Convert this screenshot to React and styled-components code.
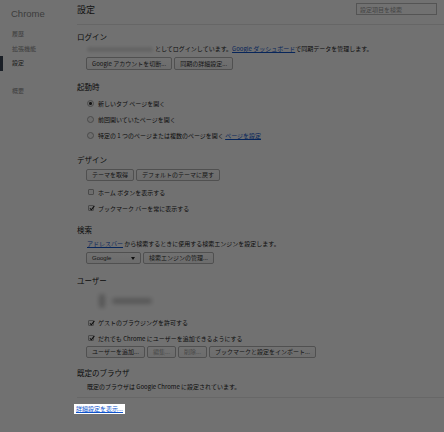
import React from "react";
import styled, { createGlobalStyle } from "styled-components";

const GlobalStyle = createGlobalStyle`
  html, body {
    margin: 0;
    padding: 0;
    background: #ffffff;
  }
  body {
    font-family: "Noto Sans CJK JP", "Liberation Sans", sans-serif;
    color: #222222;
  }
`;

const Page = styled.div`
  position: relative;
  width: 444px;
  height: 432px;
  display: flex;
  overflow: hidden;
  background: #ffffff;
`;

// dim layer over the whole settings page
const Overlay = styled.div`
  position: absolute;
  inset: 0;
  background: rgba(0, 0, 0, 0.557);
  z-index: 1;
`;

const Sidebar = styled.nav`
  width: 72px;
  flex-shrink: 0;
  display: flex;
  flex-direction: column;
`;

const Brand = styled.div`
  height: 27px;
  padding-left: 11px;
  display: flex;
  align-items: center;
  font-family: "Liberation Sans", Arial, sans-serif;
  font-size: 9.5px;
  color: #8a8a8a;
`;

const NavItem = styled.div`
  height: 14.5px;
  line-height: 14.5px;
  padding-left: 9px;
  font-size: 6px;
  color: ${(p) => (p.$active ? "#444444" : "#8e8e8e")};
  border-left: 3px solid ${(p) => (p.$active ? "#3b4656" : "transparent")};
  margin-top: ${(p) => (p.$gap ? "13.5px" : "0")};
`;

const Main = styled.main`
  flex: 1;
  padding-left: 5px;
  display: flex;
  flex-direction: column;
`;

const Header = styled.header`
  height: 24px;
  flex-shrink: 0;
  border-bottom: 1px solid #e6e6e6;
  display: flex;
  align-items: center;
  justify-content: space-between;
  padding-right: 7px;
`;

const Title = styled.h1`
  margin: 0;
  font-size: 9px;
  font-weight: normal;
  color: #303030;
  line-height: 12px;
  padding-bottom: 5px;
`;

const Search = styled.input`
  box-sizing: border-box;
  width: 81px;
  height: 12px;
  border: 1px solid #bdbdbd;
  padding: 0 3px;
  font-family: inherit;
  font-size: 6px;
  margin-bottom: 6px;
  outline: none;
  &::placeholder {
    color: #9a9a9a;
  }
`;

const Section = styled.section`
  box-sizing: border-box;
  height: ${(p) => p.$h}px;
  flex-shrink: 0;
  padding-top: 6px;
  display: flex;
  flex-direction: column;
  border-bottom: ${(p) => (p.$rule ? "1px solid #e8e8e8" : "none")};
`;

const SectionTitle = styled.h3`
  margin: 0;
  height: 12px;
  line-height: 12px;
  font-size: 7.5px;
  font-weight: normal;
  color: #222222;
`;

const Body = styled.div`
  padding-left: 10px;
  padding-top: ${(p) => p.$pt || 0}px;
  display: flex;
  flex-direction: column;
`;

const Text = styled.div`
  height: 12px;
  line-height: 12px;
  margin-top: ${(p) => p.$mt || 0}px;
  font-size: 6px;
  white-space: nowrap;
  display: flex;
  align-items: center;
`;

const Link = styled.a`
  color: #1155cc;
  text-decoration: underline;
  cursor: pointer;
`;

const Blur = styled.span`
  display: inline-block;
  width: ${(p) => p.$w}px;
  height: ${(p) => p.$hh}px;
  background: ${(p) => p.$c || "#d8d8d8"};
  border-radius: 3px;
  filter: blur(${(p) => p.$r || 1.5}px);
  margin-right: ${(p) => p.$mr || 0}px;
`;

const ButtonRow = styled.div`
  display: flex;
  gap: 2px;
  margin-top: ${(p) => p.$mt ?? 2}px;
  margin-left: -1px;
`;

const Button = styled.button`
  box-sizing: border-box;
  height: ${(p) => p.$h || 12}px;
  padding: 0 5px;
  font-family: inherit;
  font-size: 6px;
  line-height: 1;
  color: ${(p) => (p.disabled ? "#a8a8a8" : "#333333")};
  background: linear-gradient(#ffffff, #f4f4f4);
  border: 1px solid #b4b4b4;
  border-radius: 2px;
  white-space: nowrap;
`;

const Select = styled.div`
  box-sizing: border-box;
  width: 55px;
  height: 12px;
  padding: 0 5px;
  display: flex;
  align-items: center;
  justify-content: space-between;
  font-family: "Liberation Sans", Arial, sans-serif;
  font-size: 6px;
  color: #333333;
  background: linear-gradient(#ffffff, #f4f4f4);
  border: 1px solid #b4b4b4;
  border-radius: 2px;
`;

const Caret = styled.span`
  width: 0;
  height: 0;
  border-left: 2.5px solid transparent;
  border-right: 2.5px solid transparent;
  border-top: 3px solid #222;
`;

const OptionRow = styled.label`
  height: ${(p) => p.$h || 16}px;
  margin-top: ${(p) => p.$mt || 0}px;
  display: flex;
  align-items: center;
  gap: 4px;
  font-size: 6px;
  white-space: nowrap;
`;

const Radio = styled.span`
  box-sizing: border-box;
  width: 7px;
  height: 7px;
  border-radius: 50%;
  border: 1px solid #a8a8a8;
  background: ${(p) =>
    p.$on
      ? "radial-gradient(circle, #333 0 1.3px, #f4f4f4 1.6px)"
      : "#f6f6f6"};
  flex-shrink: 0;
`;

const Box = styled.span`
  box-sizing: border-box;
  width: 6px;
  height: 6px;
  border: 1px solid #a8a8a8;
  border-radius: 1px;
  background: #f6f6f6;
  margin: 0 0.5px;
  flex-shrink: 0;
  position: relative;
`;

const Tick = styled.svg`
  position: absolute;
  left: 0;
  top: -1px;
`;

const Profile = styled.div`
  height: 28px;
  display: flex;
  align-items: center;
  padding-left: 12px;
  gap: 7px;
`;

const Footer = styled.div`
  display: flex;
  padding-top: 6px;
`;

// the spot-lit link stays above the dim layer
const Highlight = styled.a`
  position: relative;
  z-index: 2;
  display: block;
  margin-left: -3px;
  padding: 0 2px;
  height: 10px;
  line-height: 10px;
  background: #ffffff;
  color: #1155cc;
  text-decoration: underline;
  font-size: 6px;
`;

function Check({ on }) {
  return (
    <Box>
      {on && (
        <Tick width="6" height="6" viewBox="0 0 10 10">
          <path d="M1.5 5.5 L4 8 L9 1.5" fill="none" stroke="#222" strokeWidth="1.8" />
        </Tick>
      )}
    </Box>
  );
}

export default function App() {
  return (
    <>
      <GlobalStyle />
      <Page>
        <Sidebar>
          <Brand>Chrome</Brand>
          <NavItem>履歴</NavItem>
          <NavItem>拡張機能</NavItem>
          <NavItem $active>設定</NavItem>
          <NavItem $gap>概要</NavItem>
        </Sidebar>
        <Main>
          <Header>
            <Title>設定</Title>
            <Search placeholder="設定項目を検索" />
          </Header>

          <Section $h={50}>
            <SectionTitle>ログイン</SectionTitle>
            <Body>
              <Text>
                <Blur $w={66} $hh={5} $c="#e2e2e2" $mr={2} />
                としてログインしています。<Link>Google ダッシュボード</Link>で同期データを管理します。
              </Text>
              <ButtonRow>
                <Button $h={13}>Google アカウントを切断...</Button>
                <Button $h={13}>同期の詳細設定...</Button>
              </ButtonRow>
            </Body>
          </Section>

          <Section $h={73}>
            <SectionTitle>起動時</SectionTitle>
            <Body $pt={2}>
              <OptionRow>
                <Radio $on />
                新しいタブ ページを開く
              </OptionRow>
              <OptionRow>
                <Radio />
                前回開いていたページを開く
              </OptionRow>
              <OptionRow>
                <Radio />
                <span>
                  特定の 1 つのページまたは複数のページを開く <Link>ページを設定</Link>
                </span>
              </OptionRow>
            </Body>
          </Section>

          <Section $h={70}>
            <SectionTitle>デザイン</SectionTitle>
            <Body>
              <ButtonRow $mt={3}>
                <Button>テーマを取得</Button>
                <Button>デフォルトのテーマに戻す</Button>
              </ButtonRow>
              <OptionRow $mt={3}>
                <Check />
                ホーム ボタンを表示する
              </OptionRow>
              <OptionRow>
                <Check on />
                ブックマーク バーを常に表示する
              </OptionRow>
            </Body>
          </Section>

          <Section $h={51}>
            <SectionTitle>検索</SectionTitle>
            <Body>
              <Text $mt={2}>
                <Link>アドレスバー</Link>&nbsp;から検索するときに使用する検索エンジンを設定します。
              </Text>
              <ButtonRow>
                <Select>
                  Google
                  <Caret />
                </Select>
                <Button>検索エンジンの管理...</Button>
              </ButtonRow>
            </Body>
          </Section>

          <Section $h={92}>
            <SectionTitle>ユーザー</SectionTitle>
            <Body>
              <Profile>
                <Blur $w={6} $hh={14} $c="#c4c4c4" $r={2} />
                <Blur $w={40} $hh={6} $c="#c8c8c8" $r={2} />
              </Profile>
              <OptionRow $h={15.5}>
                <Check on />
                ゲストのブラウジングを許可する
              </OptionRow>
              <OptionRow $h={15.5}>
                <Check on />
                だれでも Chrome にユーザーを追加できるようにする
              </OptionRow>
              <ButtonRow $mt={0}>
                <Button>ユーザーを追加...</Button>
                <Button disabled>編集...</Button>
                <Button disabled>削除...</Button>
                <Button>ブックマークと設定をインポート...</Button>
              </ButtonRow>
            </Body>
          </Section>

          <Section $h={37} $rule>
            <SectionTitle>既定のブラウザ</SectionTitle>
            <Body>
              <Text $mt={2}>既定のブラウザは Google Chrome に設定されています。</Text>
            </Body>
          </Section>

          <Footer>
            <Highlight>詳細設定を表示...</Highlight>
          </Footer>
        </Main>
        <Overlay />
      </Page>
    </>
  );
}
